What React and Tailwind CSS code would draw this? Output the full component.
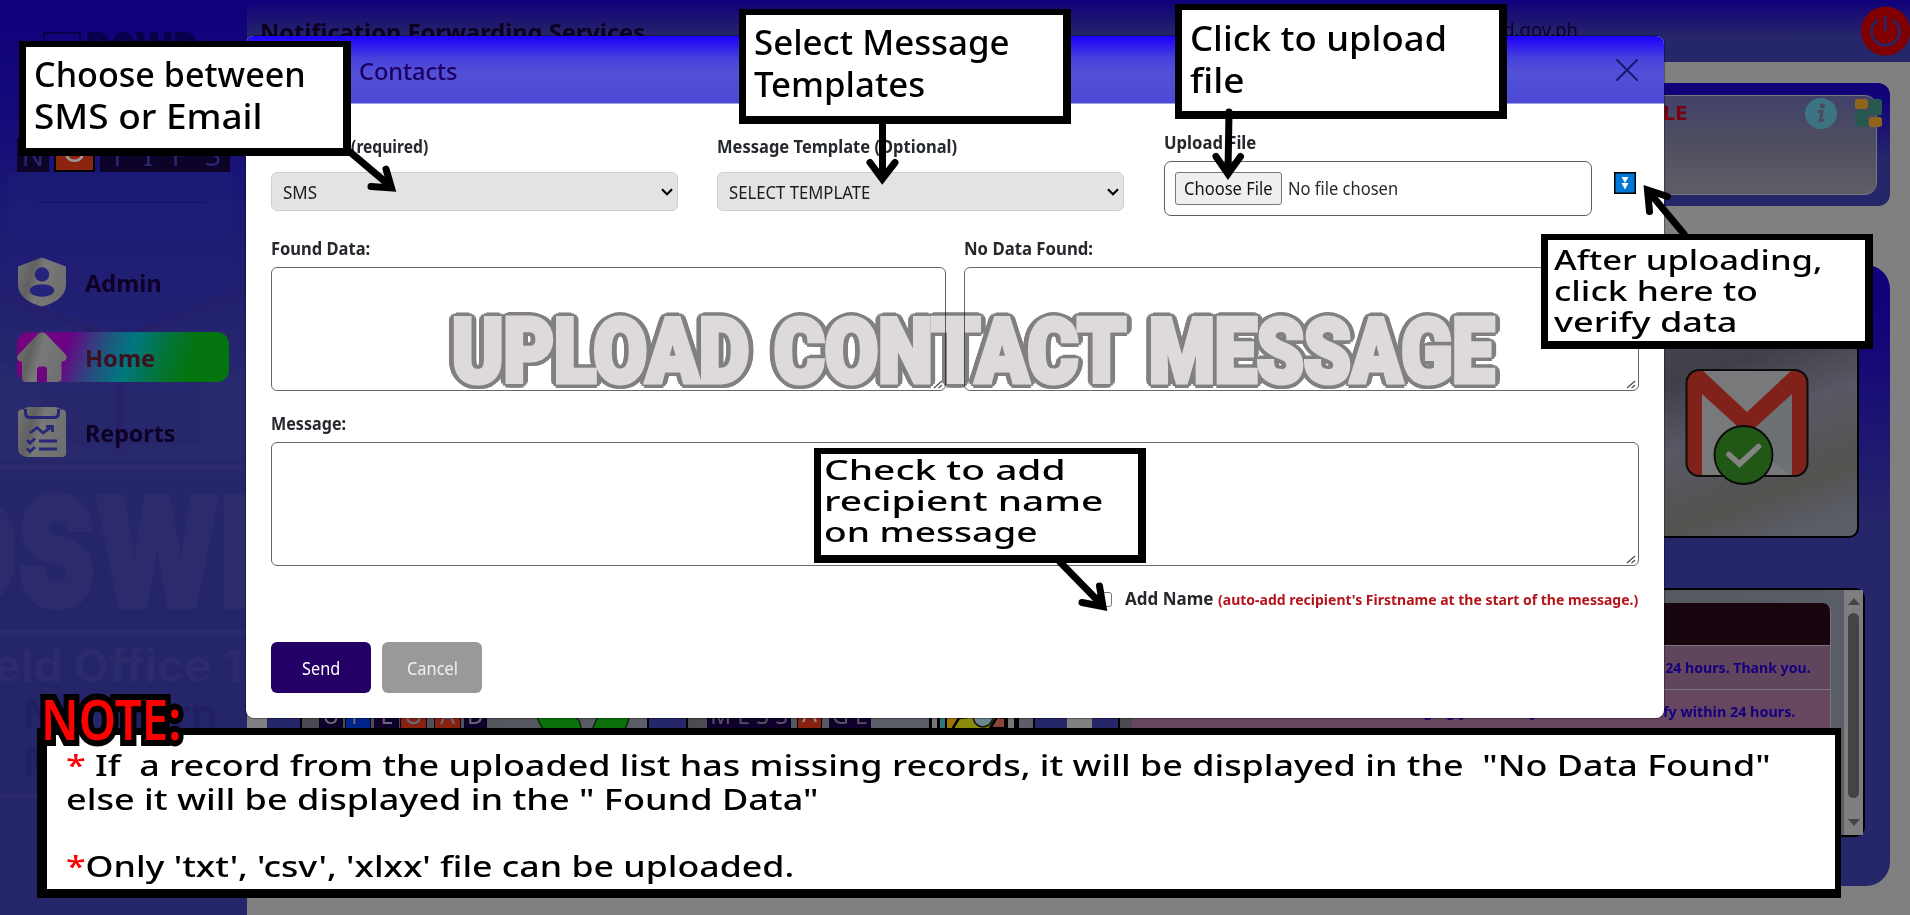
import React, { useLayoutEffect, useRef, useState } from 'react';

// Single line of text stretched or condensed to an exact width.
function Fit({ w, className = '', children }) {
  const ref = useRef(null);
  const [scale, setScale] = useState(1);
  useLayoutEffect(() => {
    const natural = ref.current.offsetWidth;
    if (natural) setScale(w / natural);
  }, [w]);
  return (
    <span className={`block shrink-0 ${className}`} style={{ width: w }}>
      <span ref={ref} className="inline-block origin-left whitespace-pre" style={{ transform: `scaleX(${scale})` }}>
        {children}
      </span>
    </span>
  );
}

function Chevron() {
  return (
    <svg className="h-[8px] w-[12px]" viewBox="0 0 12 8" fill="none" stroke="#000" strokeWidth="2.2">
      <path d="M1 1.3 6 6.3 11 1.3" />
    </svg>
  );
}

function Grip() {
  return (
    <svg className="absolute bottom-[1px] right-[2px] h-[9px] w-[10px]" viewBox="0 0 10 9" fill="none" stroke="#444" strokeWidth="1.1">
      <path d="M1 8 9 1M5.5 8 9 5" />
    </svg>
  );
}

function TextBox({ w }) {
  return (
    <div className="relative h-[124px] rounded-[6px] border border-[#6b6468] bg-white" style={{ width: w }}>
      <Grip />
    </div>
  );
}

function NavItem({ icon, label, w, active }) {
  return (
    <div
      className={`flex h-[50px] w-[212px] items-center rounded-[12px] ${
        active ? 'bg-[linear-gradient(110deg,#78007c_0%,#6a0484_24%,#2a4a80_38%,#007880_52%,#037440_66%,#04740f_80%)]' : ''
      }`}
    >
      {icon}
      <Fit w={w} className={`ml-[18px] mt-px text-[23px] font-bold leading-[30px] ${active ? 'text-[#3c1020]' : 'text-[#0e0026]'}`}>
        {label}
      </Fit>
    </div>
  );
}

const iconFill = (
  <defs>
    <linearGradient id="nav" x1="0" y1="0" x2="1" y2="0.3">
      <stop offset="0" stopColor="#767676" />
      <stop offset="0.35" stopColor="#606060" />
      <stop offset="0.55" stopColor="#787878" />
      <stop offset="1" stopColor="#707070" />
    </linearGradient>
  </defs>
);

function ShieldIcon() {
  return (
    <svg className="h-[50px] w-[50px]" viewBox="0 0 50 50">
      {iconFill}
      <path d="M25 0.5 49 9.500V27C49 40 36 47 25 49.500 14 47 1 40 1 27V9.500Z" fill="url(#nav)" />
      <circle cx="25" cy="17.500" r="7.200" fill="#25237a" />
      <ellipse cx="25" cy="33.500" rx="12.200" ry="6.200" fill="#25237a" />
    </svg>
  );
}

function HomeIcon() {
  return (
    <svg className="h-[50px] w-[50px]" viewBox="0 0 50 50">
      <path
        d="M21 2Q25-1.500 29 2L48.500 22.500Q51 26 48 28.500Q46 30 44.500 29.500V46Q44.500 50 40.500 50H30V38Q30 34.500 27 34.500H23Q20 34.500 20 38V50H9Q5 50 5 46V29.500Q3 30 1 28Q-1 25.500 1.500 22.500Z"
        fill="url(#nav)"
      />
    </svg>
  );
}

function ReportIcon() {
  return (
    <svg className="h-[50px] w-[50px]" viewBox="0 0 50 50" fill="none">
      <path d="M1 6Q1 3 4 2.500H7Q7 0 14 0H36Q43 0 43 2.500H46Q49 3 49 6V46Q49 50 45 50H10Q1 49 1 41Z" fill="url(#nav)" />
      <path d="M8.500 2V6Q8.500 10.500 13 10.500H37Q41.500 10.500 41.500 6V2" stroke="#27277a" strokeWidth="3" />
      <path d="M13 26 20 20.500 26 26 35 19.500M29 19.500H35.500V25M22 34H40M22 42H40M10 33 13 36 18 31.500M10 41.500 13 44.500 18 40" stroke="#27277a" strokeWidth="2.800" />
    </svg>
  );
}

function Sidebar() {
  return (
    <aside className="relative h-[915px] w-[247px] shrink-0 overflow-hidden bg-[linear-gradient(#10007c_0px,#140a7a_110px,#1b1874_200px,#222170_300px,#27286c_400px,#25256a_600px,#25256a_915px)] pl-[17px] pt-[31px]">
      <svg className="absolute left-0 top-0 h-[915px] w-[247px]" viewBox="0 0 247 915">
        <path d="M9 180Q9 172 17 172H225Q233 172 233 180V280Q233 292 224 296L122 335 18 296Q9 292 9 280Z" fill="#201e78" opacity="0.45" />
        <path d="M0 295 120 340 247 290M120 380V455" stroke="#2b1c66" strokeWidth="6" fill="none" opacity="0.4" />
        <path d="M0 362 40 385V445H200V385L247 365V460H0Z" fill="#2c2c70" opacity="0.4" />
        <path d="M0 467H247M0 632.500H247M0 796.500H247" stroke="#2b2a6d" strokeWidth="5" />
      </svg>
      <div className="absolute left-[-66px] top-[477px] font-[Inter] font-black leading-[150px] text-[#2c2b6c]">
        <Fit w={370} className="text-[153px] [-webkit-text-stroke:4px_#2c2b6c]">DSWD</Fit>
      </div>
      <div className="absolute left-[-46px] top-[639px] font-[Inter] font-bold text-[#2c2b6c]">
        <Fit w={320} className="text-[45px] leading-[54px]">Field Office 10</Fit>
      </div>
      <div className="absolute left-[23px] top-[690px] font-[Inter] text-[40px] font-bold leading-[48px] text-[#202062]">
        <Fit w={195}>Northern</Fit>
        <Fit w={205}>Mindanao</Fit>
      </div>
      <div className="relative flex flex-col">
        <div className="ml-[26px] flex h-[44px] items-start gap-[5px] text-[#07004a]">
          <div className="mt-[1px] h-[38px] w-[38px] border-2 border-current" />
          <Fit w={113} className="-mt-[8px] font-[Inter] text-[46px] font-black leading-[50px]">DSWD</Fit>
        </div>
        <div className="mt-[63px] flex h-[34px] items-center gap-[5px] text-[30px] leading-[34px] text-[#28246e]">
          <div className="h-[34px] w-[32px] bg-[#0d0228] text-center">N</div>
          <div className="h-[34px] w-[41px] border-2 border-black bg-[#8c2410] text-center leading-[22px] text-[#999]">O</div>
          <div className="flex h-[34px] w-[130px] justify-around bg-[#0d0228]">
            <span>T</span><span>I</span><span>F</span><span>S</span>
          </div>
        </div>
        <div className="ml-[21px] mt-[30px] h-px w-[169px] bg-[#15135f]" />
        <nav className="mt-[54px] flex flex-col gap-[25px]">
          <NavItem icon={<ShieldIcon />} label="Admin" w={77} />
          <NavItem icon={<HomeIcon />} label="Home" w={70} active />
          <NavItem icon={<ReportIcon />} label="Reports" w={91} />
        </nav>
      </div>
    </aside>
  );
}

function Header() {
  return (
    <header className="flex h-[62px] shrink-0 items-start justify-between bg-[linear-gradient(#0f007c_0px,#1b1272_18px,#26266a_36px,#26266a_62px)] pl-[13px]">
      <Fit w={385} className="mt-[15px] text-[24px] font-bold leading-[34px] text-[#0b0020]">Notification Forwarding Services</Fit>
      <div className="flex">
        <Fit w={175} className="mr-[283px] mt-[15px] text-[20px] leading-[30px] text-[#0b0030]">notifs@dswd.gov.ph</Fit>
        <svg className="mt-[5.500px] h-[50px] w-[49px]" viewBox="0 0 49 50" fill="none">
          <circle cx="24.500" cy="25" r="24.500" fill="#800000" />
          <path d="M16.500 14.500A14 13.500 0 1 0 32.500 14.500" stroke="#26266a" strokeWidth="2.600" strokeLinecap="round" />
          <path d="M24.500 11V24" stroke="#26266a" strokeWidth="2.600" strokeLinecap="round" />
        </svg>
      </div>
    </header>
  );
}

function Tile({ w, bg, gap = '', children }) {
  return (
    <span className={`h-[34px] shrink-0 border-x border-[#08001a] text-center ${bg} ${gap}`} style={{ width: w }}>
      {children}
    </span>
  );
}

function LeftPanel() {
  return (
    <div className="flex h-[621px] w-[800px] items-start gap-[37px] rounded-[24px] bg-[#26266a] pl-[33px] pt-[295px]">
      <div className="flex h-[230px] w-[349px] items-start rounded-[10px] border-2 border-black bg-[linear-gradient(90deg,#4a4a50,#5c5e68)] pl-[17px] pt-[136px] text-[23px] leading-[34px] text-[#6c6a78]">
        <Tile w={24} bg="bg-[#10002c]">U</Tile>
        <Tile w={26} bg="bg-[#002488]" gap="ml-[2px]">P</Tile>
        <Tile w={25} bg="bg-[#10002c]" gap="ml-[3px]">L</Tile>
        <Tile w={27} bg="bg-[#882210]" gap="ml-[1px]">O</Tile>
        <Tile w={27} bg="bg-[#882210]" gap="ml-[7px]">A</Tile>
        <Tile w={23} bg="bg-[#10002c]" gap="ml-[3px]">D</Tile>
        <svg className="-mt-[30px] ml-[49px] h-[80px] w-[96px]" viewBox="0 0 96 80" fill="#0c700c" stroke="#052a05" strokeWidth="1.500">
          <path d="M1 20V46Q2 60 20 72Q46 66 45 60Q44 50 38 49Q30 44 24 20Z" />
          <path d="M93 20V49Q92 60 80 72Q56 66 57 60L62 48 72 20Z" />
        </svg>
      </div>
      <div className="flex h-[230px] w-[349px] items-start overflow-hidden rounded-[10px] border-2 border-black bg-[linear-gradient(90deg,#4a4a50,#5c5e68_50%)] pl-[19px] pt-[136px] text-[23px] leading-[34px] text-[#55535f]">
        <span className="flex h-[34px] w-[84px] justify-around bg-[#10002c]"><span>M</span><span>E</span><span>S</span><span>S</span></span>
        <span className="ml-[6px] h-[34px] w-[25px] border-x border-black bg-[#882210] text-center leading-[30px] text-[#999]">A</span>
        <span className="ml-[7px] flex h-[34px] w-[42px] justify-around bg-[#10002c]"><span>G</span><span>E</span></span>
        <svg className="-mt-[30px] ml-[58px] h-[80px] w-[90px]" viewBox="0 0 90 80">
          <rect width="90" height="80" fill="#000" />
          <rect x="3" width="5" height="80" fill="#777" />
          <rect x="11" width="5" height="80" fill="#2f7680" />
          <rect x="18" width="58" height="80" fill="#a07408" />
          <path d="M24 60 30 50 46 48V42H72L60 62H24Z" fill="#8c8a0a" stroke="#000" strokeWidth="2.500" />
          <path d="M62 60 68 49 76 50V60Z" fill="#8c4438" stroke="#000" strokeWidth="2" />
          <ellipse cx="54" cy="48" rx="10" ry="11" fill="#6d8790" stroke="#111" strokeWidth="1.500" />
          <rect x="79" width="6" height="80" fill="#777" />
        </svg>
      </div>
    </div>
  );
}

function GmailIcon() {
  return (
    <svg className="h-[117px] w-[126px]" viewBox="0 0 126 117">
      <defs>
        <clipPath id="mail"><rect x="1.500" y="1" width="121" height="106" rx="13" /></clipPath>
      </defs>
      <g clipPath="url(#mail)">
        <rect width="126" height="110" fill="#77797a" />
        <path d="M62 58 107 20V107L85 90Z" fill="#6c7274" />
        <path d="M1 0H16L62 43 108 0H124V108H107V25L62 66 17 25V108H1Z" fill="#80211a" />
      </g>
      <rect x="1.500" y="1" width="121" height="106" rx="13" fill="none" stroke="#0b0b0b" strokeWidth="2" />
      <circle cx="58.500" cy="86" r="29" fill="#225816" stroke="#0a0a0a" strokeWidth="1.800" />
      <path d="M44 85.500 54.500 95 73.500 77.500" stroke="#858585" strokeWidth="5.500" fill="none" strokeLinecap="round" />
    </svg>
  );
}

function RightPanel() {
  return (
    <div className="flex h-[621px] w-[798px] flex-col rounded-[24px] bg-[linear-gradient(#10007c_0px,#12047a_60px,#26266a_260px)] pl-[26px] pt-[20px]">
      <div className="ml-[422px] flex h-[253px] w-[319px] shrink-0 items-start rounded-[10px] border-2 border-black bg-[linear-gradient(160deg,#484852_10%,#40404a_40%,#585864_58%,#535350_80%,#5a5c66_92%)] pl-[143px] pt-[82px]">
        <GmailIcon />
      </div>
      <div className="mt-[50px] flex h-[249px] w-[747px] shrink-0 rounded-[10px] border-2 border-black bg-[linear-gradient(90deg,#4a4a50,#5a5e66)] pl-[12px]">
        <div className="mt-[13px] w-[699px] text-[15px] font-bold text-[#14007e]">
          <div className="h-[42px] rounded-t-[8px] border-r border-[#777] bg-[#170610]" />
          <div className="flex h-[44px] justify-end border-r border-t border-[#777] bg-[#61455d] pr-[19px] leading-[42px]">
            <Fit w={252}>verified within 24 hours. Thank you.</Fit>
          </div>
          <div className="flex h-[44px] justify-end border-r border-t border-[#777] bg-[#67475f] pr-[35px] leading-[43px]">
            <Fit w={417}>messaging you. Kindly wait. We will verify within 24 hours.</Fit>
          </div>
          <div className="h-[44px] border-r border-t border-[#777] bg-[#61455d]" />
        </div>
        <div className="ml-auto flex h-[245px] w-[19px] flex-col items-center bg-[#7e7e7e] pt-[8px]">
          <div className="h-0 w-0 border-x-[6px] border-b-[7px] border-x-transparent border-b-[#444]" />
          <div className="mt-[8px] h-[185px] w-[11px] rounded-full bg-[#444]" />
          <div className="mt-[21px] h-0 w-0 border-x-[6px] border-t-[7px] border-x-transparent border-t-[#444]" />
        </div>
      </div>
    </div>
  );
}

function Page() {
  return (
    <main className="flex h-[915px] w-[1663px] flex-col bg-[#808080]">
      <Header />
      <section className="mx-[20px] mt-[21px] h-[123px] rounded-[12px] bg-[linear-gradient(#10007a_0px,#12057a_20px,#26266a_75px)] px-[13px] pt-[12px]">
        <div className="flex h-[100px] items-start justify-end rounded-[12px] border border-[#77777c] bg-[linear-gradient(#42426a,#4f4f60_50%,#5f5d66)]">
          <Fit w={91} className="mt-[5px] text-[19px] font-bold leading-[24px] text-[#780010]">PROFILE</Fit>
          <svg className="ml-[118px] mt-[2px] h-[31px] w-[32px]" viewBox="0 0 32 31">
            <ellipse cx="16" cy="15.500" rx="16" ry="15.500" fill="#3d7482" />
            <circle cx="17.500" cy="8" r="2.600" fill="#4c4c60" />
            <path d="M12.500 13.500H17L15 23Q17 23 19 21.500" fill="none" stroke="#4c4c60" strokeWidth="3" />
          </svg>
          <svg className="-mr-[6px] ml-[18px] mt-[3px] h-[28px] w-[27px]" viewBox="0 0 27 28">
            <rect y="0" width="13" height="10" rx="3" fill="#8f651c" />
            <rect x="14" width="13" height="16.500" rx="3" fill="#27584f" />
            <rect y="11" width="13" height="17" rx="3" fill="#27584f" />
            <rect x="14" y="18" width="13" height="10" rx="3" fill="#8f651c" />
          </svg>
        </div>
      </section>
      <section className="ml-[20px] mt-[59px] flex gap-[25px]">
        <LeftPanel />
        <RightPanel />
      </section>
    </main>
  );
}

function Select({ w, textW, children }) {
  return (
    <div className="mt-[13px] flex h-[39px] items-center justify-between rounded-[6px] border border-[#cfcfcf] bg-[#e3e3e3] pl-[11px] pr-[4px] text-[#1c1c1c]" style={{ width: w }}>
      <Fit w={textW} className="text-[18px] leading-[24px]">{children}</Fit>
      <Chevron />
    </div>
  );
}

const label = 'text-[17px] font-bold leading-[25px] text-[#25282c]';

function Modal() {
  return (
    <div className="absolute left-[246px] top-[36px] flex h-[682px] w-[1418px] flex-col overflow-hidden rounded-[8px] bg-white shadow-[0_0_1px_1px_rgba(0,0,0,0.35)]">
      <div className="flex h-[68px] items-center justify-between border-b border-[#a0a0e4] bg-[linear-gradient(#1a00fa_0px,#2c14f4_7px,#4640dc_22px,#5350d8_36px,#4c4ad4_67px)] pl-[25px] pr-[26px]">
        <div className="flex gap-[8px] pt-[2px] text-[24px] font-medium leading-[32px] text-[#1c0060]">
          <Fit w={80}>Upload</Fit>
          <Fit w={99}>Contacts</Fit>
        </div>
        <svg className="mt-[1px] h-[22px] w-[22px]" viewBox="0 0 22 22" stroke="#1d1670" strokeWidth="2" strokeLinecap="round">
          <path d="M1 1 21 21M21 1 1 21" />
        </svg>
      </div>
      <div className="flex flex-col pl-[25px] text-[#25282c]">
        <div className="flex h-[112px] items-start">
          <div className="w-[446px] pt-[30px]">
            <Fit w={157} className={label}>Send thru (required)</Fit>
            <Select w={407} textW={34}>SMS</Select>
          </div>
          <div className="w-[447px] pt-[30px]">
            <Fit w={240} className={label}>Message Template (Optional)</Fit>
            <Select w={407} textW={141}>SELECT TEMPLATE</Select>
          </div>
          <div className="pt-[26px]">
            <Fit w={92} className={label}>Upload File</Fit>
            <div className="mt-[6px] flex h-[55px] w-[428px] items-center rounded-[7px] border border-[#655c62] pb-px pl-[10px] text-[18px] leading-[26px]">
              <div className="flex h-[33px] w-[107px] items-center justify-center rounded-[3px] border border-[#777] bg-[#efefef] text-[#111]">
                <Fit w={89}>Choose File</Fit>
              </div>
              <Fit w={110} className="ml-[6px]">No file chosen</Fit>
            </div>
          </div>
          <svg className="ml-[22px] mt-[68px] h-[22px] w-[22px]" viewBox="0 0 22 22">
            <rect x="0.750" y="0.750" width="20.500" height="20.500" fill="#0078d7" stroke="#000" strokeWidth="1.500" />
            <path d="M7.500 5H14.500L11 11ZM7.500 11H14.500L11 17.500Z" fill="#fff" />
          </svg>
        </div>
        <div className="mt-[20px] flex gap-[18px]">
          <div>
            <Fit w={99} className={label}>Found Data:</Fit>
            <div className="mt-[6px]"><TextBox w={675} /></div>
          </div>
          <div>
            <Fit w={129} className={label}>No Data Found:</Fit>
            <div className="mt-[6px]"><TextBox w={675} /></div>
          </div>
        </div>
        <div className="mt-[20px]">
          <Fit w={75} className={label}>Message:</Fit>
          <div className="mt-[6px]"><TextBox w={1368} /></div>
        </div>
        <div className="mt-[20px] flex h-[25px] items-center pl-[826px]">
          <div className="mt-[2px] h-[15px] w-[15px] rounded-[3px] border border-[#767676] bg-white" />
          <Fit w={88} className={`ml-[13px] ${label}`}>Add Name</Fit>
          <Fit w={420} className="ml-[5px] mt-[1px] text-[14px] font-bold leading-[25px] text-[#b4141a]">
            (auto-add recipient's Firstname at the start of the message.)
          </Fit>
        </div>
        <div className="mt-[31px] flex gap-[11px] text-[18px] leading-[26px]">
          <div className="flex h-[51px] w-[100px] items-center justify-center rounded-[6px] bg-[#240066] text-white">
            <Fit w={38}>Send</Fit>
          </div>
          <div className="flex h-[51px] w-[100px] items-center justify-center rounded-[6px] bg-[#999] text-[#f0f0f0]">
            <Fit w={51}>Cancel</Fit>
          </div>
        </div>
      </div>
    </div>
  );
}

function Callout({ className, children }) {
  return (
    <div className={`absolute h-[115px] w-[332px] border-b-[8px] border-l-[7px] border-r-[8px] border-t-[6px] border-black bg-white text-black ${className}`}>
      {children}
    </div>
  );
}

const big = 'text-[35px] font-medium leading-[42px]';
const wide = 'text-[27px] font-medium leading-[31px]';

function Annotations() {
  return (
    <>
      <div className="absolute left-[448px] top-[287px] font-[Roboto] text-[89px] font-black leading-[130px] text-[#dedada] mix-blend-multiply [-webkit-text-stroke:5px_#dedada] [text-shadow:8px_0_#808080,-8px_0_#808080,0_6px_#808080,0_-6px_#808080,7.400px_2.300px_#808080,7.400px_-2.300px_#808080,-7.400px_2.300px_#808080,-7.400px_-2.300px_#808080,5.600px_4.200px_#808080,5.600px_-4.200px_#808080,-5.600px_4.200px_#808080,-5.600px_-4.200px_#808080,3px_5.500px_#808080,3px_-5.500px_#808080,-3px_5.500px_#808080,-3px_-5.500px_#808080]">
        <div className="flex pl-[4px]">
          <Fit w={297}>UPLOAD</Fit>
          <Fit w={352} className="ml-[25px]">CONTACT</Fit>
          <Fit w={345} className="ml-[23px]">MESSAGE</Fit>
        </div>
      </div>
      <Callout className="left-[19px] top-[41px] pl-[8px] pt-[6px]">
        <Fit w={272} className={big}>Choose between</Fit>
        <Fit w={229} className={big}>SMS or Email</Fit>
      </Callout>
      <Callout className="left-[739px] top-[9px] pl-[8px] pt-[6px]">
        <Fit w={256} className={big}>Select Message</Fit>
        <Fit w={171} className={big}>Templates</Fit>
      </Callout>
      <Callout className="left-[1175px] top-[4px] pl-[8px] pt-[7px]">
        <Fit w={257} className={big}>Click to upload</Fit>
        <Fit w={54} className={big}>file</Fit>
      </Callout>
      <Callout className="left-[1541px] top-[234px] pl-[6px] pt-[4px]">
        <Fit w={269} className={wide}>After uploading,</Fit>
        <Fit w={204} className={wide}>click here to</Fit>
        <Fit w={183} className={wide}>verify data</Fit>
      </Callout>
      <Callout className="left-[814px] top-[448px] pl-[3px]">
        <Fit w={242} className={wide}>Check to add</Fit>
        <Fit w={279} className={wide}>recipient name</Fit>
        <Fit w={213} className={wide}>on message</Fit>
      </Callout>
      <div className="absolute left-[37px] top-[728px] flex h-[170px] w-[1804px] flex-col border-b-[9px] border-l-[10px] border-r-[6px] border-t-[7px] border-black bg-white pl-[19px] pt-[14px] text-[28px] font-medium leading-[33.600px] text-black">
        <Fit w={1705}><span className="text-[#ff0000]">*</span> If  a record from the uploaded list has missing records, it will be displayed in the  "No Data Found"</Fit>
        <Fit w={752}>else it will be displayed in the " Found Data"</Fit>
        <Fit w={728} className="mt-[33.600px]"><span className="text-[#ff0000]">*</span>Only 'txt', 'csv', 'xlxx' file can be uploaded.</Fit>
      </div>
      <div className="absolute left-[41px] top-[679px] text-[56px] font-semibold leading-[78px] text-[#ff0000] [-webkit-text-stroke:12px_#000] [paint-order:stroke_fill] [stroke-linejoin:round]">
        <Fit w={140}>NOTE:</Fit>
      </div>
      <svg className="absolute left-0 top-0 h-[915px] w-[1910px]" viewBox="0 0 1910 915" fill="none" stroke="#000" strokeLinecap="round" strokeWidth="7">
        <path d="M350 152 389 185M386 169 391.500 188 371 186.500" />
        <path d="M882.500 122V176M870 162.500 882.300 179 895 162.500" />
        <path d="M1229 112 1228 172M1216 156.500 1228 174 1240.500 156.500" />
        <path d="M1684 234 1649 192M1667.500 196.500 1647.500 190 1649.500 211.500" />
        <path d="M1060 562 1101 604M1099.500 586 1103 606.500 1082 602.500" />
      </svg>
    </>
  );
}

export default function App() {
  return (
    <div className="relative h-[915px] w-[1910px] overflow-hidden bg-[#808080] font-['Noto_Sans','Open_Sans',sans-serif]">
      <div className="flex">
        <Sidebar />
        <Page />
      </div>
      <Modal />
      <Annotations />
    </div>
  );
}
